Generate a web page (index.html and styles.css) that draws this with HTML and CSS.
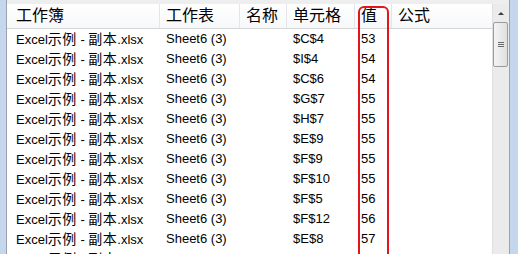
FILE: index.html
```html
<!DOCTYPE html>
<html lang="zh-CN">
  <head>
    <meta charset="UTF-8" />
    <meta name="viewport" content="width=device-width, initial-scale=1.0" />
    <title>查找结果</title>
    <link rel="stylesheet" href="styles.css">
  </head>
  <body>
    <div class="window">
      <div class="pane">
        <div class="list">
          <div class="row head">
            <span class="c1">工作簿</span>
            <span class="c2">工作表</span>
            <span class="c3">名称</span>
            <span class="c4">单元格</span>
            <span class="c5">值</span>
            <span class="c6">公式</span>
          </div>
          <div id="rows"></div>
          <div class="mark"></div>
        </div>
        <div class="scrollbar">
          <div class="arrow"></div>
          <div class="thumb"><i></i><i></i><i></i></div>
        </div>
      </div>
    </div>

    <script>
      const data = [
        ["$C$4", 53], ["$I$4", 54], ["$C$6", 54], ["$G$7", 55],
        ["$H$7", 55], ["$E$9", 55], ["$F$9", 55], ["$F$10", 55],
        ["$F$5", 56], ["$F$12", 56], ["$E$8", 57], ["$D$8", 57]
      ];
      const rows = document.getElementById("rows");
      for (let i = 0; i < data.length; i++) {
        const row = document.createElement("div");
        row.className = "row";
        row.innerHTML =
          `<span class="c1">Excel<b>示例</b> - <b>副本</b>.xlsx</span>` +
          `<span class="c2">Sheet6 (3)</span>` +
          `<span class="c3"></span>` +
          `<span class="c4">${data[i][0]}</span>` +
          `<span class="c5">${data[i][1]}</span>` +
          `<span class="c6"></span>`;
        rows.appendChild(row);
      }
    </script>
  </body>
</html>
```

FILE: styles.css
```css
html, body {
  margin: 0;
  height: 100%;
  overflow: hidden;
}
body {
  background: #c4d7ec;
  font-family: "Liberation Sans", "Noto Sans CJK SC", sans-serif;
  color: #000;
}
.window {
  height: 100%;
  padding-left: 6px;
  padding-right: 8px;
  box-sizing: border-box;
}
.pane {
  display: flex;
  height: 100%;
  border-left: 1px solid #9aa3ad;
  border-right: 1px solid #9aa3ad;
  padding-top: 4px;
  background: #eeeeee;
  box-sizing: border-box;
}
.list {
  position: relative;
  flex: 1;
  background: #fff;
  padding-left: 3px;
  overflow: hidden;
}
.row {
  display: flex;
  height: 20px;
  line-height: 20px;
  font-size: 13px;
  white-space: nowrap;
}
.row span {
  padding-left: 6px;
  box-sizing: border-box;
  overflow: hidden;
}
.row b {
  font-weight: normal;
  font-size: 14px;
  letter-spacing: 0.5px;
}
.head {
  height: 25px;
  line-height: 24px;
  font-size: 16px;
  background: linear-gradient(#ffffff, #f7f8fa);
  border-bottom: 1px solid #d5d5d5;
  box-sizing: border-box;
  margin-left: -3px;
  padding-left: 3px;
}
.head span {
  border-right: 1px solid #e3e5e8;
}
.head .c6 {
  border-right: none;
}
.c1 { width: 150px; }
.c2 { width: 80px; }
.c3 { width: 47px; }
.c4 { width: 68px; }
.c5 { width: 37px; }
.c6 { flex: 1; }

.mark {
  position: absolute;
  left: 351px;
  top: 2px;
  width: 27px;
  height: 270px;
  border: 2px solid #e3161d;
  border-radius: 6px;
}

.scrollbar {
  width: 17px;
  background: #ebebeb;
  border-left: 1px solid #e0e0e0;
  box-sizing: border-box;
}
.arrow {
  height: 17px;
  position: relative;
}
.arrow::after {
  content: "";
  position: absolute;
  left: 5px;
  top: 8px;
  border-left: 3px solid transparent;
  border-right: 3px solid transparent;
  border-bottom: 3px solid #3c3c3c;
}
.thumb {
  margin: 1px 1px 0 0;
  height: 43px;
  border: 1px solid #9b9b9b;
  border-radius: 2px;
  background: linear-gradient(to right, #f4f4f4, #e0e0e0);
  display: flex;
  flex-direction: column;
  align-items: center;
  justify-content: center;
  gap: 1px;
}
.thumb i {
  display: block;
  width: 6px;
  height: 1px;
  background: #6a6a6a;
}
```
